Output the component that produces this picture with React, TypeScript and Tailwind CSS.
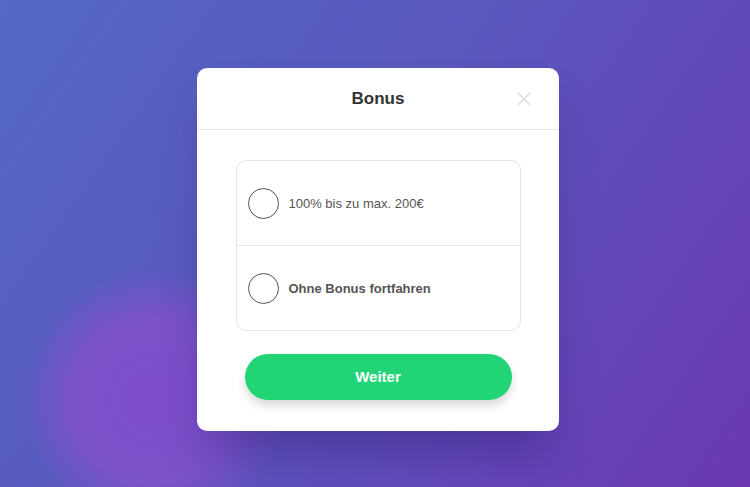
import React from "react";

export default function App() {
  return (
    <div
      className="relative w-[750px] h-[487px] overflow-hidden bg-[linear-gradient(125deg,#5468c5_0%,#5a57bd_45%,#6b38b2_100%)]"
      style={{ fontFamily: '"Liberation Sans", Arial, sans-serif' }}
    >
      <div className="absolute left-[25px] top-[270px] w-[260px] h-[260px] rounded-full bg-[radial-gradient(circle,#7f4ccb_0%,#7a52c9_45%,rgba(112,90,200,0)_72%)]" />
      <div className="relative flex pl-[197px] pt-[68px]">
        <div className="w-[362px] h-[363px] bg-white rounded-[10px] shadow-[0_30px_40px_-10px_rgba(50,30,120,0.45)] flex flex-col">
          <div className="relative h-[62px] border-b border-[#e6e6e6] flex items-center justify-center">
            <span className="text-[17px] font-bold text-[#333]">Bonus</span>
            <svg
              className="absolute left-[320px] top-[24px]"
              width="14"
              height="14"
              viewBox="0 0 14 14"
            >
              <path d="M1 1 L13 13 M13 1 L1 13" stroke="#d8d8d8" strokeWidth="1.3" />
            </svg>
          </div>
          <div className="flex flex-col items-center pt-[30px]">
            <div className="w-[285px] border border-[#e5e5e5] rounded-[10px] flex flex-col">
              <div className="h-[85px] flex items-center pl-[11px] border-b border-[#e5e5e5]">
                <div className="w-[31px] h-[31px] rounded-full border border-[#555]" />
                <span className="ml-[10px] mt-[2px] text-[13px] text-[#555]">100% bis zu max. 200€</span>
              </div>
              <div className="h-[84px] flex items-center pl-[11px]">
                <div className="w-[31px] h-[31px] rounded-full border border-[#555]" />
                <span className="ml-[10px] mt-[2px] text-[13px] font-bold text-[#555]">Ohne Bonus fortfahren</span>
              </div>
            </div>
            <button className="mt-[23px] w-[267px] h-[46px] rounded-full bg-[#21d476] text-white text-[15px] font-bold shadow-[0_6px_10px_rgba(0,0,0,0.15)]">
              Weiter
            </button>
          </div>
        </div>
      </div>
    </div>
  );
}
